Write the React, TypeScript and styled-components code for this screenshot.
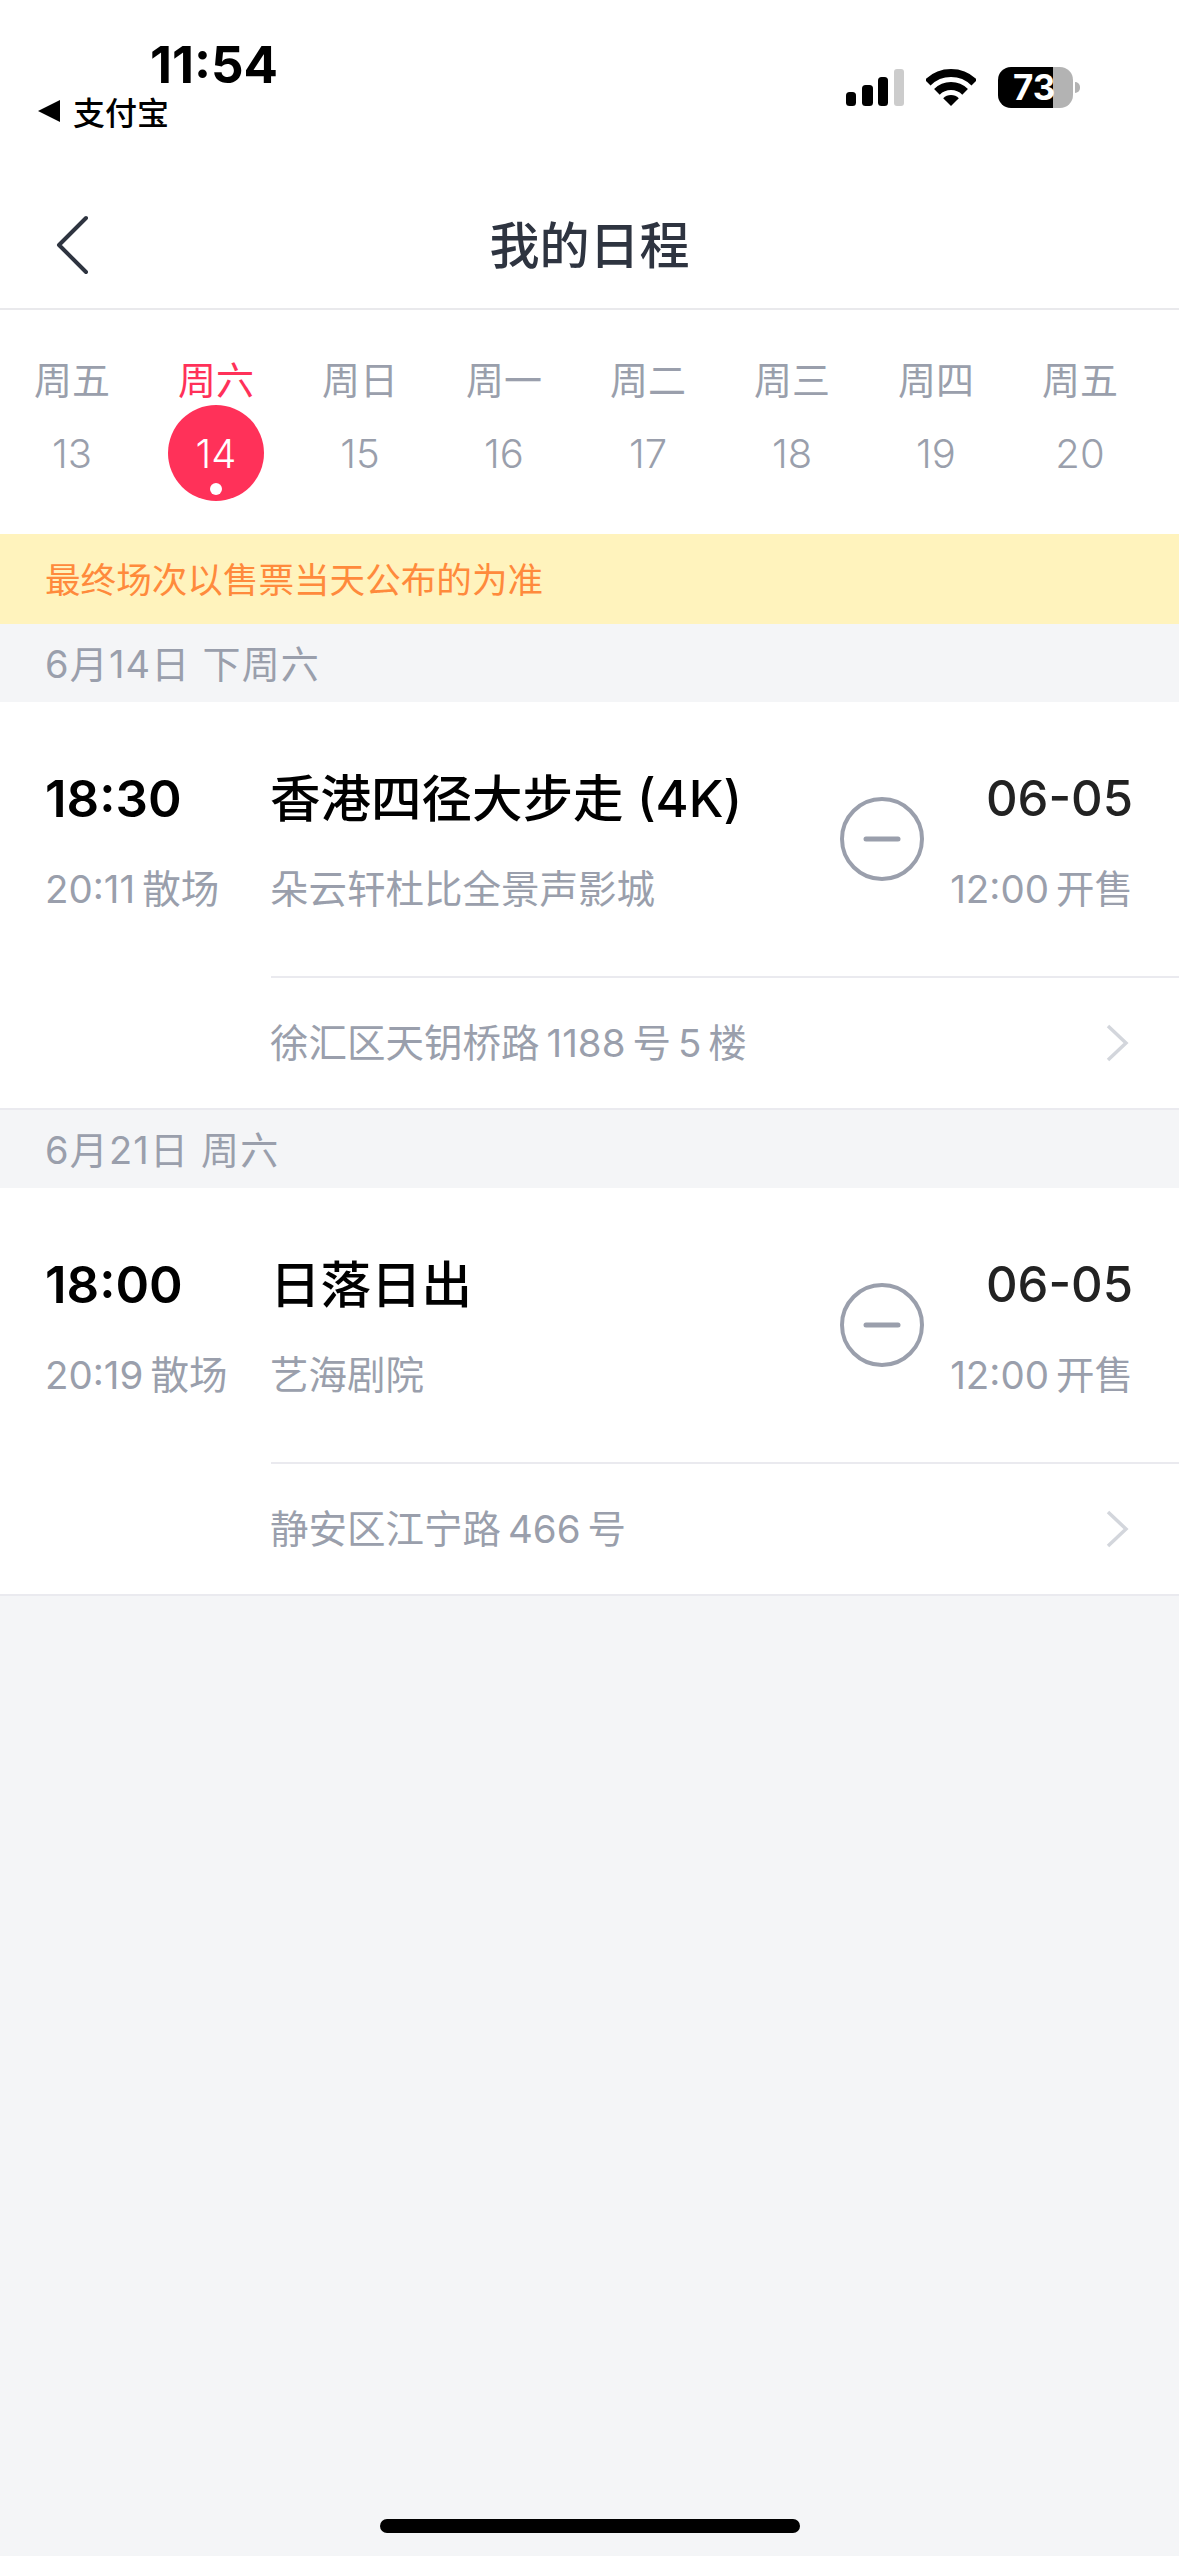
import React from "react";
import styled, { createGlobalStyle } from "styled-components";

const GlobalStyle = createGlobalStyle`
  html, body {
    margin: 0;
    padding: 0;
    background: #f4f5f7;
  }
  body {
    font-family: Inter, "Noto Sans CJK SC", sans-serif;
  }
`;

const Page = styled.div`
  position: relative;
  width: 1179px;
  height: 2556px;
  overflow: hidden;
  background: #f4f5f7;
`;

const Top = styled.div`
  background: #ffffff;
`;

const StatusBar = styled.div`
  height: 182px;
  box-sizing: border-box;
  padding: 40px 106px 0 38px;
  display: flex;
  justify-content: space-between;
  align-items: flex-start;
`;

const StatusLeft = styled.div`
  display: flex;
  flex-direction: column;
`;

const Clock = styled.div`
  margin-left: 112px;
  font-size: 51px;
  line-height: 50px;
  font-weight: 700;
  color: #000;
`;

const BackToApp = styled.div`
  margin-top: 3px;
  height: 36px;
  display: flex;
  align-items: center;
  gap: 13px;
  font-size: 32px;
  font-weight: 500;
  color: #000;
`;

const StatusIcons = styled.div`
  margin-top: 27px;
  display: flex;
  align-items: center;
  gap: 22px;
`;

const Battery = styled.div`
  width: 75px;
  height: 41px;
  border-radius: 13px;
  overflow: hidden;
  background: linear-gradient(to right, #000 0 55px, #b3b3b3 55px);
  color: #fff;
  font-size: 35px;
  line-height: 41px;
  font-weight: 700;
  padding-left: 15px;
  box-sizing: border-box;
`;

const BatteryWrap = styled.div`
  position: relative;
  &::after {
    content: "";
    position: absolute;
    left: 77px;
    top: 15px;
    width: 5px;
    height: 11px;
    border-radius: 0 6px 6px 0;
    background: #b3b3b3;
  }
`;

const NavBar = styled.div`
  position: relative;
  height: 128px;
  padding-bottom: 6px;
  box-sizing: border-box;
  display: flex;
  align-items: center;
  justify-content: center;
  border-bottom: 2px solid #e9e9ec;
`;

const NavTitle = styled.div`
  font-size: 50px;
  font-weight: 500;
  color: #2e3440;
`;

const BackButton = styled.div`
  position: absolute;
  left: 56px;
  top: 33px;
  display: flex;
`;

const Calendar = styled.div`
  height: 224px;
  padding-top: 48px;
  box-sizing: border-box;
  display: grid;
  grid-template-columns: repeat(8, 144px);
`;

const Day = styled.div`
  display: flex;
  flex-direction: column;
  align-items: center;
`;

const WeekName = styled.div<{ $active?: boolean }>`
  font-size: 38px;
  line-height: 44px;
  color: ${(p) => (p.$active ? "#ff3159" : "#9a9fac")};
`;

const DateCell = styled.div<{ $active?: boolean }>`
  position: relative;
  margin-top: 3px;
  width: 96px;
  height: 96px;
  border-radius: 50%;
  display: flex;
  align-items: center;
  justify-content: center;
  font-size: 40px;
  font-weight: 300;
  background: ${(p) => (p.$active ? "#ff3159" : "transparent")};
  color: ${(p) => (p.$active ? "#ffffff" : "#9a9fac")};
`;

const DateDot = styled.span`
  position: absolute;
  left: 42px;
  bottom: 6px;
  width: 12px;
  height: 12px;
  border-radius: 50%;
  background: #fff;
`;

const Notice = styled.div`
  height: 90px;
  padding: 0 0 3px 45px;
  box-sizing: border-box;
  display: flex;
  align-items: center;
  background: #fff3bd;
  color: #ff8a3c;
  font-size: 35.6px;
`;

const SectionHead = styled.div`
  height: 78px;
  padding: 0 0 3px 45px;
  box-sizing: border-box;
  display: flex;
  align-items: center;
  font-size: 38px;
  letter-spacing: 1.2px;
  color: #9a9fac;
`;

const Card = styled.div`
  height: 408px;
  box-sizing: border-box;
  background: #fff;
  border-bottom: 2px solid #eaeaef;
  display: flex;
  flex-direction: column;
`;

const CardMain = styled.div`
  height: 274px;
  flex: none;
  display: flex;
  padding-top: 67px;
  box-sizing: border-box;
`;

const TimeCol = styled.div`
  width: 270px;
  flex: none;
  padding-left: 45px;
  box-sizing: border-box;
`;

const InfoCol = styled.div`
  width: 570px;
  flex: none;
`;

const BigText = styled.div<{ $size?: number; $weight?: number; $color?: string }>`
  font-size: ${(p) => p.$size ?? 51}px;
  line-height: 60px;
  font-weight: ${(p) => p.$weight ?? 600};
  color: ${(p) => p.$color ?? "#000"};
  white-space: nowrap;
`;

const SubText = styled.div`
  margin-top: 38px;
  font-size: 38.5px;
  line-height: 44px;
  color: #9a9fac;
  white-space: nowrap;
`;

const ActionCol = styled.div`
  width: 84px;
  flex: none;
  padding-top: 28px;
`;

const SaleCol = styled.div`
  flex: 1;
  padding-right: 46px;
  display: flex;
  flex-direction: column;
  align-items: flex-end;
`;

const AddressRow = styled.div`
  flex: 1;
  margin-left: 271px;
  padding-right: 50px;
  border-top: 2px solid #eaeaef;
  display: flex;
  align-items: center;
  justify-content: space-between;
  font-size: 38.5px;
  color: #9a9fac;
`;

const AddressText = styled.span`
  margin: -6px 0 0 -1px;
`;

const HomeBar = styled.div`
  position: absolute;
  left: 380px;
  bottom: 23px;
  width: 420px;
  height: 14px;
  border-radius: 7px;
  background: #000;
`;

const days = [
  { week: "周五", date: 13 },
  { week: "周六", date: 14, active: true },
  { week: "周日", date: 15 },
  { week: "周一", date: 16 },
  { week: "周二", date: 17 },
  { week: "周三", date: 18 },
  { week: "周四", date: 19 },
  { week: "周五", date: 20 },
];

const shows = [
  {
    head: "6月14日 下周六",
    start: "18:30",
    end: "20:11\u2009散场",
    title: "香港四径大步走 (4K)",
    venue: "朵云轩杜比全景声影城",
    address: "徐汇区天钥桥路\u20091188\u2009号\u20095\u2009楼",
  },
  {
    head: "6月21日 周六",
    start: "18:00",
    end: "20:19\u2009散场",
    title: "日落日出",
    venue: "艺海剧院",
    address: "静安区江宁路\u2009466\u2009号",
  },
];

function SignalIcon() {
  return (
    <svg width="58" height="37" viewBox="0 0 58 37">
      <rect x="0" y="23" width="10" height="14" rx="3.5" fill="#000" />
      <rect x="16" y="16" width="11" height="21" rx="3.5" fill="#000" />
      <rect x="32" y="8" width="10" height="29" rx="3.5" fill="#000" />
      <rect x="48" y="0" width="10" height="37" rx="3" fill="#ccc" />
    </svg>
  );
}

function WifiIcon() {
  return (
    <svg width="50" height="37" viewBox="0 0 50 37">
      <path d="M1.7 13.7A33 33 0 0 1 48.3 13.7" fill="none" stroke="#000" strokeWidth="8" />
      <path d="M10.9 22.9A20 20 0 0 1 39.1 22.9" fill="none" stroke="#000" strokeWidth="8" />
      <path d="M25 37L17.2 29.2A11 11 0 0 1 32.8 29.2Z" fill="#000" />
    </svg>
  );
}

function MinusCircle() {
  return (
    <svg width="84" height="84" viewBox="0 0 84 84" style={{ display: "block" }}>
      <circle cx="42" cy="42" r="40" fill="none" stroke="#9a9fac" strokeWidth="4" />
      <path d="M26 42H58" stroke="#9a9fac" strokeWidth="5" strokeLinecap="round" />
    </svg>
  );
}

export default function App() {
  return (
    <Page>
      <GlobalStyle />
      <Top>
        <StatusBar>
          <StatusLeft>
            <Clock>11:54</Clock>
            <BackToApp>
              <svg width="22" height="22" viewBox="0 0 22 22">
                <path d="M22 0V22L0 11Z" fill="#000" />
              </svg>
              支付宝
            </BackToApp>
          </StatusLeft>
          <StatusIcons>
            <SignalIcon />
            <WifiIcon />
            <BatteryWrap>
              <Battery>73</Battery>
            </BatteryWrap>
          </StatusIcons>
        </StatusBar>
        <NavBar>
          <BackButton>
            <svg width="34" height="60" viewBox="0 0 34 60">
              <path
                d="M30 3L3 30L30 57"
                fill="none"
                stroke="#2e3440"
                strokeWidth="4"
                strokeLinecap="round"
                strokeLinejoin="round"
              />
            </svg>
          </BackButton>
          <NavTitle>我的日程</NavTitle>
        </NavBar>
        <Calendar>
          {days.map((d) => (
            <Day key={d.date}>
              <WeekName $active={d.active}>{d.week}</WeekName>
              <DateCell $active={d.active}>
                {d.date}
                {d.active && <DateDot />}
              </DateCell>
            </Day>
          ))}
        </Calendar>
      </Top>
      <Notice>最终场次以售票当天公布的为准</Notice>
      {shows.map((s) => (
        <React.Fragment key={s.head}>
          <SectionHead>{s.head}</SectionHead>
          <Card>
            <CardMain>
              <TimeCol>
                <BigText>{s.start}</BigText>
                <SubText>{s.end}</SubText>
              </TimeCol>
              <InfoCol>
                <BigText $size={50.5} $weight={500}>
                  {s.title}
                </BigText>
                <SubText>{s.venue}</SubText>
              </InfoCol>
              <ActionCol>
                <MinusCircle />
              </ActionCol>
              <SaleCol>
                <BigText $size={49} $weight={500} $color="#222222">
                  06-05
                </BigText>
                <SubText>{"12:00\u2009开售"}</SubText>
              </SaleCol>
            </CardMain>
            <AddressRow>
              <AddressText>{s.address}</AddressText>
              <svg width="24" height="40" viewBox="0 0 24 40">
                <path d="M3 3L21 20L3 37" fill="none" stroke="#d3d6dc" strokeWidth="3.5" />
              </svg>
            </AddressRow>
          </Card>
        </React.Fragment>
      ))}
      <HomeBar />
    </Page>
  );
}
